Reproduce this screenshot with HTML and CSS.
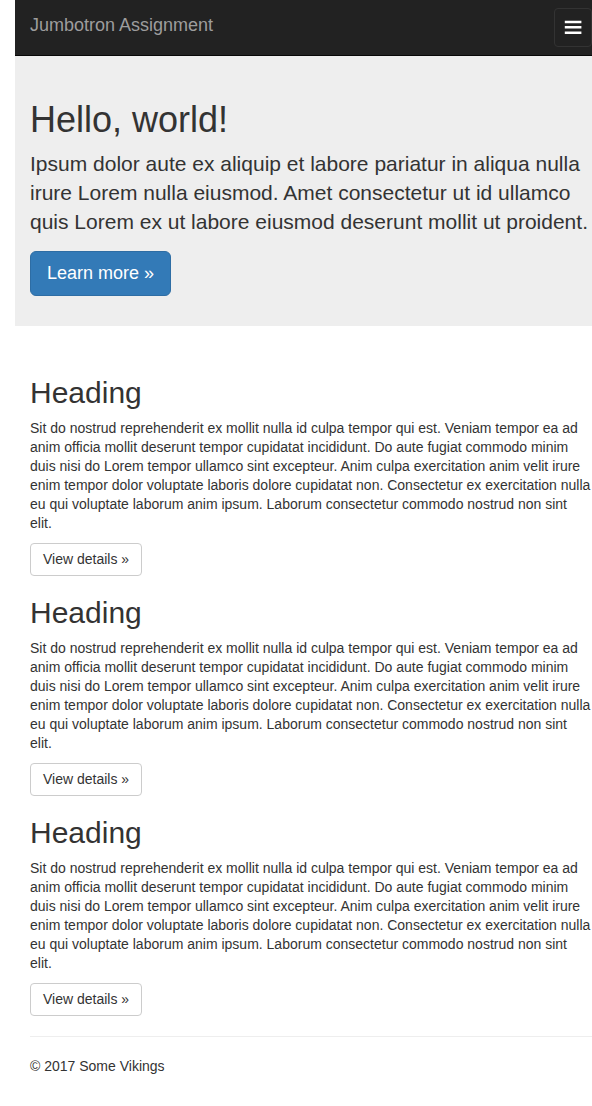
FILE: index.html
```html
<!DOCTYPE html>
<html lang="en">
<head>
<meta charset="utf-8">
<meta name="viewport" content="width=device-width, initial-scale=1">
<title>Jumbotron Assignment</title>
<link rel="stylesheet" href="styles.css">
</head>
<body>
<nav class="navbar">
  <a class="brand" href="#">Jumbotron Assignment</a>
  <button class="toggle" type="button" aria-label="Toggle navigation">
    <svg class="toggle-icon" viewBox="0 0 18 15" aria-hidden="true">
      <path d="M.8 .7h16.6v2.6H.8zM.8 6h16.6v2.6H.8zM.8 11.4h16.6V14H.8z" fill="#fff"/>
    </svg>
  </button>
</nav>
<header class="jumbotron">
  <h1 class="title">Hello, world!</h1>
  <p class="lead">Ipsum dolor aute ex aliquip et labore pariatur in aliqua nulla irure Lorem nulla eiusmod. Amet consectetur ut id ullamco quis Lorem ex ut labore eiusmod deserunt mollit ut proident.</p>
  <a class="btn btn-primary" href="#">Learn more »</a>
</header>
<main class="content">
  <section class="entry">
    <h2 class="heading">Heading</h2>
    <p class="text">Sit do nostrud reprehenderit ex mollit nulla id culpa tempor qui est. Veniam tempor ea ad anim officia mollit deserunt tempor cupidatat incididunt. Do aute fugiat commodo minim duis nisi do Lorem tempor ullamco sint excepteur. Anim culpa exercitation anim velit irure enim tempor dolor voluptate laboris dolore cupidatat non. Consectetur ex exercitation nulla eu qui voluptate laborum anim ipsum. Laborum consectetur commodo nostrud non sint elit.</p>
    <a class="btn btn-default" href="#">View details »</a>
  </section>
  <section class="entry">
    <h2 class="heading">Heading</h2>
    <p class="text">Sit do nostrud reprehenderit ex mollit nulla id culpa tempor qui est. Veniam tempor ea ad anim officia mollit deserunt tempor cupidatat incididunt. Do aute fugiat commodo minim duis nisi do Lorem tempor ullamco sint excepteur. Anim culpa exercitation anim velit irure enim tempor dolor voluptate laboris dolore cupidatat non. Consectetur ex exercitation nulla eu qui voluptate laborum anim ipsum. Laborum consectetur commodo nostrud non sint elit.</p>
    <a class="btn btn-default" href="#">View details »</a>
  </section>
  <section class="entry">
    <h2 class="heading">Heading</h2>
    <p class="text">Sit do nostrud reprehenderit ex mollit nulla id culpa tempor qui est. Veniam tempor ea ad anim officia mollit deserunt tempor cupidatat incididunt. Do aute fugiat commodo minim duis nisi do Lorem tempor ullamco sint excepteur. Anim culpa exercitation anim velit irure enim tempor dolor voluptate laboris dolore cupidatat non. Consectetur ex exercitation nulla eu qui voluptate laborum anim ipsum. Laborum consectetur commodo nostrud non sint elit.</p>
    <a class="btn btn-default" href="#">View details »</a>
  </section>
</main>
<footer class="footer">
  <p class="text">© 2017 Some Vikings</p>
</footer>
</body>
</html>
```
FILE: styles.css
```css
* {
  box-sizing: border-box;
}

body {
  margin: 0 0 0 15px;
  background: #fff;
  color: #333;
  font-family: "Liberation Sans", Arial, sans-serif;
  font-size: 14px;
  line-height: 19px;
}

h1, h2, p {
  margin: 0;
  font-weight: 400;
}

a {
  text-decoration: none;
}

.navbar {
  display: flex;
  justify-content: space-between;
  align-items: flex-start;
  padding: 8px 0 8px 15px;
  background: #222;
  border-bottom: 1px solid #080808;
}

.brand {
  padding-top: 7px;
  color: #9d9d9d;
  font-size: 18px;
  line-height: 20px;
}

.toggle {
  display: flex;
  align-items: center;
  justify-content: center;
  width: 38px;
  height: 39px;
  padding: 0;
  background: transparent;
  border: 1px solid #333;
  border-radius: 4px;
}

.toggle-icon {
  width: 18px;
  height: 15px;
}

.jumbotron {
  display: flex;
  flex-direction: column;
  align-items: flex-start;
  padding: 44px 0 30px 15px;
  background: #eee;
}

.title {
  font-size: 36px;
  line-height: 40px;
}

.lead {
  margin: 9px 0 15px;
  font-size: 21px;
  line-height: 29px;
}

.btn {
  border: 1px solid;
}

.btn-primary {
  padding: 10px 16px;
  background: #337ab7;
  border-color: #2e6da4;
  border-radius: 6px;
  color: #fff;
  font-size: 18px;
  line-height: 23px;
}

.btn-default {
  padding: 6px 12px;
  background: #fff;
  border-color: #ccc;
  border-radius: 4px;
  color: #333;
}

.content {
  display: flex;
  flex-direction: column;
  gap: 20px;
  padding: 50px 0 20px 15px;
}

.entry {
  display: flex;
  flex-direction: column;
  align-items: flex-start;
  gap: 10px;
}

.heading {
  font-size: 30px;
  line-height: 33px;
}

.footer {
  margin-left: 15px;
  padding: 20px 0 30px;
  border-top: 1px solid #eee;
}
```
